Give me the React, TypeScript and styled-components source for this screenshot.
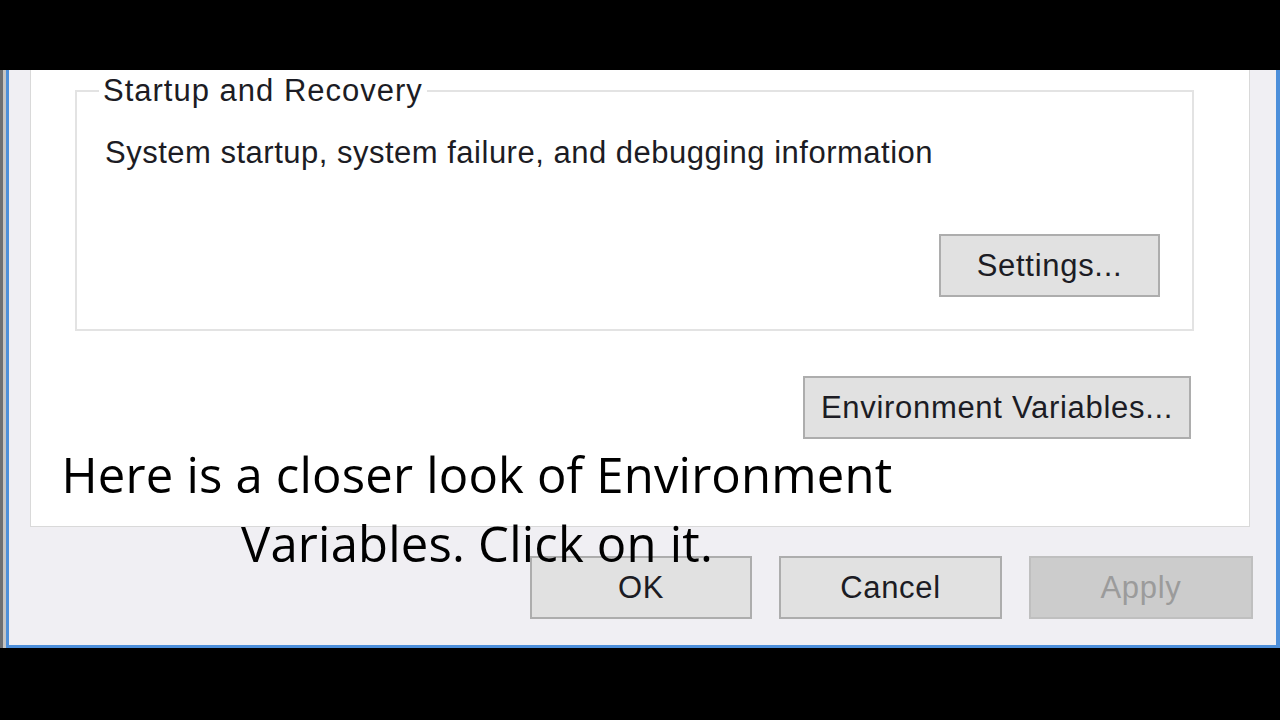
import React from 'react';
import styled, {createGlobalStyle} from "styled-components";

const GlobalStyle = createGlobalStyle`
  html, body {
    margin: 0;
    padding: 0;
    background: #000;
  }
  * {
    box-sizing: border-box;
  }
`

const Stage = styled.div`
  width: 1280px;
  height: 720px;
  display: flex;
  flex-direction: column;
  background: #000;
  overflow: hidden;
`

interface BarProps {
    h: number
}
const BlackBar = styled.div<BarProps>`
  height: ${props => props.h}px;
  flex: 0 0 auto;
  background: #000;
`

const Screen = styled.div`
  position: relative;
  height: 578px;
  display: flex;
  background: linear-gradient(90deg, #6d6f73 0, #6d6f73 3px, #c4c4c4 3px);
`

const Window = styled.div`
  flex: 1;
  margin-left: 6px;
  display: flex;
  flex-direction: column;
  background: #f0eff3;
  border-left: 3px solid #4d8fda;
  border-right: 4px solid #4d8fda;
  border-bottom: 3px solid #4d8fda;
  padding: 0 26px 0 21px;
`

const TabPanel = styled.div`
  height: 457px;
  flex: 0 0 auto;
  background: #fff;
  border: 1px solid #d9d9d9;
  border-top: none;
  padding: 20px 55px 0 44px;
  display: flex;
  flex-direction: column;
  align-items: stretch;
`

const GroupBox = styled.div`
  position: relative;
  height: 241px;
  border: 2px solid #e3e3e3;
  padding: 45px 32px 0 28px;
  display: flex;
  flex-direction: column;
`

const GroupLabel = styled.span`
  position: absolute;
  top: -17px;
  left: 22px;
  padding: 0 4px;
  background: #fff;
  font-family: "Liberation Sans", Arial, sans-serif;
  font-size: 31px;
  letter-spacing: 1px;
  line-height: 32px;
  color: #1c1c24;
`

const DialogText = styled.p`
  margin: 0;
  font-family: "Liberation Sans", Arial, sans-serif;
  font-size: 31px;
  letter-spacing: 0.5px;
  line-height: 32px;
  color: #1c1c24;
`

const Row = styled.div`
  display: flex;
  justify-content: flex-end;
`

interface BtnProps {
    w: number
    disabled?: boolean
}
const Button = styled.div<BtnProps>`
  width: ${props => props.w}px;
  height: 63px;
  display: flex;
  align-items: center;
  justify-content: center;
  background: ${props => props.disabled ? '#cccccc' : '#e1e1e1'};
  border: 2px solid ${props => props.disabled ? '#bfbfbf' : '#adadad'};
  font-family: "Liberation Sans", Arial, sans-serif;
  font-size: 31px;
  letter-spacing: 0.7px;
  color: ${props => props.disabled ? '#9b9b9b' : '#1c1c24'};
`

const SettingsRow = styled(Row)`
  margin-top: 65px;
`

const EnvRow = styled(Row)`
  margin-top: 45px;
  margin-right: 3px;
`

const ActionRow = styled.div`
  display: flex;
  justify-content: flex-end;
  gap: 27px;
  margin-top: 29px;
  margin-right: -3px;
`

const Caption = styled.div`
  position: absolute;
  left: 52px;
  top: 370px;
  width: 850px;
  text-align: center;
  font-family: "Open Sans", "Noto Sans", sans-serif;
  font-size: 49px;
  letter-spacing: 0.2px;
  line-height: 69px;
  color: #000;
`

function App() {
    return (
        <Stage>
            <GlobalStyle/>
            <BlackBar h={70}/>
            <Screen>
                <Window>
                    <TabPanel>
                        <GroupBox>
                            <GroupLabel>Startup and Recovery</GroupLabel>
                            <DialogText>System startup, system failure, and debugging information</DialogText>
                            <SettingsRow>
                                <Button w={221}>Settings...</Button>
                            </SettingsRow>
                        </GroupBox>
                        <EnvRow>
                            <Button w={388}>Environment Variables...</Button>
                        </EnvRow>
                    </TabPanel>
                    <ActionRow>
                        <Button w={222}>OK</Button>
                        <Button w={223}>Cancel</Button>
                        <Button w={224} disabled>Apply</Button>
                    </ActionRow>
                </Window>
                <Caption>Here is a closer look of Environment Variables. Click on it.</Caption>
            </Screen>
            <BlackBar h={72}/>
        </Stage>
    );
}

export default App;
